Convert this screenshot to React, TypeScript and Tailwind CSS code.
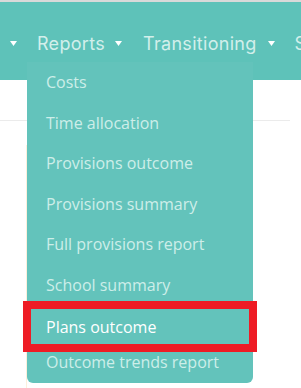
import React from "react";

const Tri = () => (
  <svg width="7" height="5" viewBox="0 0 7 5" className="shrink-0">
    <path d="M0 0 L7 0 L3.5 5 Z" fill="#ffffff" />
  </svg>
);

const items = [
  "Costs",
  "Time allocation",
  "Provisions outcome",
  "Provisions summary",
  "Full provisions report",
  "School summary",
];

export default function App() {
  return (
    <div className="relative w-[301px] h-[388px] overflow-hidden bg-white">
      <div className="h-[2px] bg-[#d9d9d9]" />
      <nav
        className="h-[78px] bg-[#5ec2b9] flex items-center pt-[4px] whitespace-nowrap text-[18px] text-[#d2efeb] tracking-[0.3px]"
        style={{ fontFamily: "Inter, 'Noto Sans', sans-serif" }}
      >
        <span className="ml-[10px]"><Tri /></span>
        <span className="ml-[20px]">Reports</span>
        <span className="ml-[10px]"><Tri /></span>
        <span className="ml-[21px]">Transitioning</span>
        <span className="ml-[11px]"><Tri /></span>
        <span className="ml-[20px]">S</span>
      </nav>
      <div className="mt-[40px] h-px w-[290px] bg-[#ebebeb]" />
      <div className="ml-[26px] mt-[24px] h-[300px] w-[8px] border-l border-[#fdf0dc]" />

      <div
        className="absolute left-[27px] top-[62px] w-[226px] h-[321px] rounded-b-[6px] bg-[#63c3bb] text-[16px] text-[#cdeee9] flex flex-col"
        style={{ fontFamily: "'Open Sans', sans-serif" }}
      >
        {items.map((t) => (
          <div key={t} className="h-[40.5px] flex items-center pl-[19px] shrink-0">
            {t}
          </div>
        ))}
        <div className="-mx-[4px] mt-[-4px] h-[51px] border-[8px] border-[#ee1c25] flex items-center pl-[15px] text-white shrink-0">
          Plans outcome
        </div>
        <div className="h-[20px] flex items-center pl-[19px] shrink-0">
          Outcome trends report
        </div>
      </div>
    </div>
  );
}
